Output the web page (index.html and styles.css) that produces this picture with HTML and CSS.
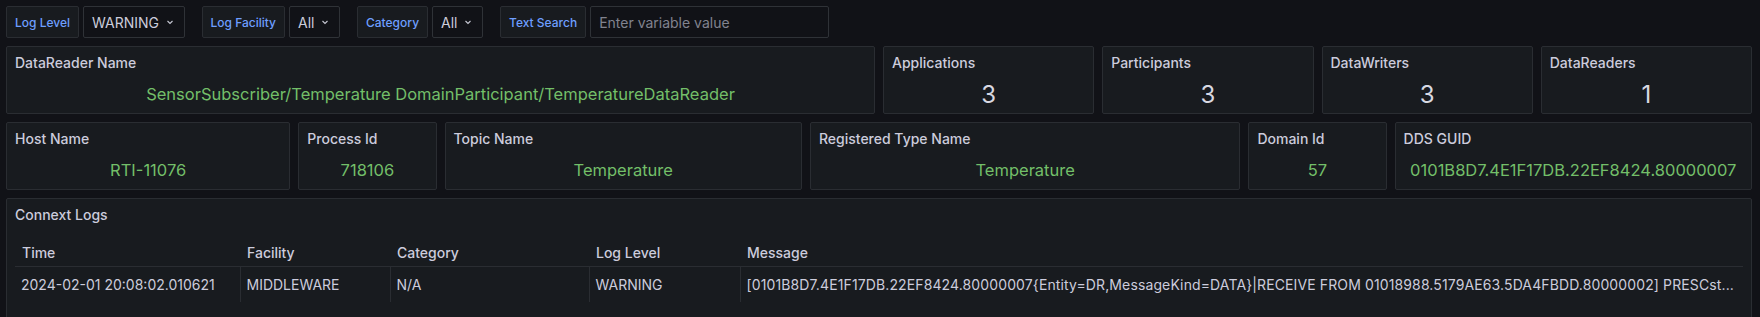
FILE: index.html
```html
<!DOCTYPE html>
<html lang="en">
<head>
    <meta charset="UTF-8">
    <meta name="viewport" content="width=device-width, initial-scale=1.0">
    <title>Connext DataReader</title>
    <link rel="stylesheet" href="styles.css">
</head>
<body>
    <div class="vars">
        <div class="var">
            <span class="var-label">Log Level</span>
            <div class="var-select">WARNING
                <svg class="chevron" width="8" height="8" viewBox="0 0 8 8"><path d="M1.5 3 L4 5.5 L6.5 3" /></svg>
            </div>
        </div>
        <div class="var">
            <span class="var-label">Log Facility</span>
            <div class="var-select">All
                <svg class="chevron" width="8" height="8" viewBox="0 0 8 8"><path d="M1.5 3 L4 5.5 L6.5 3" /></svg>
            </div>
        </div>
        <div class="var">
            <span class="var-label">Category</span>
            <div class="var-select">All
                <svg class="chevron" width="8" height="8" viewBox="0 0 8 8"><path d="M1.5 3 L4 5.5 L6.5 3" /></svg>
            </div>
        </div>
        <div class="var">
            <span class="var-label">Text Search</span>
            <input class="var-input" type="text" placeholder="Enter variable value">
        </div>
    </div>

    <div class="dashboard">
        <div class="panel span-12">
            <div class="panel-title">DataReader Name</div>
            <div class="stat green">SensorSubscriber/Temperature DomainParticipant/TemperatureDataReader</div>
        </div>
        <div class="panel span-3">
            <div class="panel-title">Applications</div>
            <div class="stat big">3</div>
        </div>
        <div class="panel span-3">
            <div class="panel-title">Participants</div>
            <div class="stat big">3</div>
        </div>
        <div class="panel span-3">
            <div class="panel-title">DataWriters</div>
            <div class="stat big">3</div>
        </div>
        <div class="panel span-3">
            <div class="panel-title">DataReaders</div>
            <div class="stat big">1</div>
        </div>

        <div class="panel span-4">
            <div class="panel-title">Host Name</div>
            <div class="stat green">RTI-11076</div>
        </div>
        <div class="panel span-2">
            <div class="panel-title">Process Id</div>
            <div class="stat green">718106</div>
        </div>
        <div class="panel span-5">
            <div class="panel-title">Topic Name</div>
            <div class="stat green">Temperature</div>
        </div>
        <div class="panel span-6">
            <div class="panel-title">Registered Type Name</div>
            <div class="stat green">Temperature</div>
        </div>
        <div class="panel span-2">
            <div class="panel-title">Domain Id</div>
            <div class="stat green">57</div>
        </div>
        <div class="panel span-5">
            <div class="panel-title">DDS GUID</div>
            <div class="stat green">0101B8D7.4E1F17DB.22EF8424.80000007</div>
        </div>

        <div class="panel span-24 logs">
            <div class="panel-title">Connext Logs</div>
            <table class="log-table">
                <colgroup>
                    <col class="col-time">
                    <col class="col-facility">
                    <col class="col-category">
                    <col class="col-level">
                    <col>
                </colgroup>
                <thead>
                    <tr>
                        <th>Time</th>
                        <th>Facility</th>
                        <th>Category</th>
                        <th>Log Level</th>
                        <th>Message</th>
                    </tr>
                </thead>
                <tbody>
                    <tr>
                        <td>2024-02-01 20:08:02.010621</td>
                        <td>MIDDLEWARE</td>
                        <td>N/A</td>
                        <td>WARNING</td>
                        <td class="msg">[0101B8D7.4E1F17DB.22EF8424.80000007{Entity=DR,MessageKind=DATA}|RECEIVE FROM 01018988.5179AE63.5DA4FBDD.80000002] PRESCst...</td>
                    </tr>
                </tbody>
            </table>
        </div>
    </div>
</body>
</html>
```

FILE: styles.css
```css
body {
    margin: 0;
    background: #111217;
    color: #ccccdc;
    font-family: Inter, "Noto Sans", sans-serif;
    font-size: 14px;
    overflow: hidden;
}

.vars {
    display: flex;
    gap: 17px;
    padding: 6px 6px 0 6px;
}

.var {
    display: flex;
    gap: 4px;
}

.var-label {
    display: flex;
    align-items: center;
    height: 32px;
    box-sizing: border-box;
    padding: 0 8px;
    background: #181b1f;
    border: 1px solid #2a2d32;
    border-radius: 2px;
    color: #6e9fff;
    font-size: 12px;
    font-weight: 500;
}

.var-select {
    display: flex;
    align-items: center;
    gap: 7px;
    height: 32px;
    box-sizing: border-box;
    padding: 0 9.5px 0 8px;
    border: 1px solid #2f3237;
    border-radius: 2px;
    color: #ccccdc;
    font-size: 14px;
}

.chevron path {
    fill: none;
    stroke: #c7c8d4;
    stroke-width: 1.1;
}

.var-input {
    width: 239px;
    height: 32px;
    box-sizing: border-box;
    padding: 0 8px;
    background: #111217;
    border: 1px solid #2f3237;
    border-radius: 2px;
    color: #ccccdc;
    font-family: inherit;
    font-size: 14px;
    outline: none;
}

.var-input::placeholder {
    color: #81838f;
}

.dashboard {
    display: grid;
    grid-template-columns: repeat(24, 1fr);
    grid-auto-rows: 68px;
    gap: 8px;
    padding: 8px 8px 0 6px;
}

.panel {
    display: flex;
    flex-direction: column;
    background: #181b1f;
    border: 1px solid #2a2d32;
    border-radius: 2px;
    min-width: 0;
}

.span-2 { grid-column: span 2; }
.span-3 { grid-column: span 3; }
.span-4 { grid-column: span 4; }
.span-5 { grid-column: span 5; }
.span-6 { grid-column: span 6; }
.span-12 { grid-column: span 12; }
.span-24 { grid-column: span 24; }

.panel-title {
    height: 31px;
    line-height: 31px;
    padding: 0 8px;
    font-weight: 500;
    color: #ccccdc;
}

.stat {
    flex: 1;
    display: flex;
    align-items: center;
    justify-content: center;
    padding-bottom: 3px;
    white-space: nowrap;
}

.stat.green {
    color: #73bf69;
    font-size: 16.5px;
}

.stat.big {
    color: #d8d9e2;
    font-size: 24px;
}

.logs {
    grid-row: span 3;
    height: 200px;
}

.log-table {
    margin: 0 8px;
    border-collapse: collapse;
    table-layout: fixed;
    width: calc(100% - 16px);
}

.col-time { width: 225px; }
.col-facility { width: 150px; }
.col-category { width: 199px; }
.col-level { width: 151px; }

.log-table th {
    height: 31px;
    padding: 0 7px 5px;
    vertical-align: bottom;
    text-align: left;
    font-weight: 500;
    border-bottom: 1px solid #2a2d32;
}

.log-table td {
    height: 35px;
    padding: 0 6px;
    border-right: 1px solid #2a2d32;
    white-space: nowrap;
    overflow: hidden;
    text-overflow: ellipsis;
}

.log-table td:last-child {
    border-right: none;
}

.log-table .msg {
    letter-spacing: 0.12px;
}
```
